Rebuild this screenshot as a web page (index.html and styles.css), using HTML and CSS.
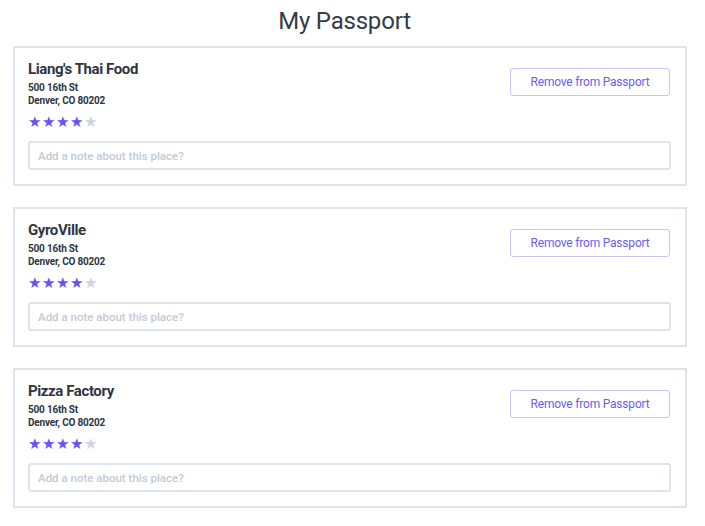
FILE: index.html
```html
<!DOCTYPE html>
<html>
<head>
<meta charset="utf-8">
<link rel="stylesheet" href="styles.css">
</head>
<body>
<h1 class="page-title">My Passport</h1>
<div class="list">
  <div class="card">
    <div class="card-top">
      <div class="info">
        <div class="name">Liang's Thai Food</div>
        <div class="addr">500 16th St<br>Denver, CO 80202</div>
        <div class="stars"><span class="star on">★</span><span class="star on">★</span><span class="star on">★</span><span class="star on">★</span><span class="star">★</span></div>
      </div>
      <button class="remove">Remove from Passport</button>
    </div>
    <input class="note" type="text" placeholder="Add a note about this place?">
  </div>
  <div class="card">
    <div class="card-top">
      <div class="info">
        <div class="name">GyroVille</div>
        <div class="addr">500 16th St<br>Denver, CO 80202</div>
        <div class="stars"><span class="star on">★</span><span class="star on">★</span><span class="star on">★</span><span class="star on">★</span><span class="star">★</span></div>
      </div>
      <button class="remove">Remove from Passport</button>
    </div>
    <input class="note" type="text" placeholder="Add a note about this place?">
  </div>
  <div class="card">
    <div class="card-top">
      <div class="info">
        <div class="name">Pizza Factory</div>
        <div class="addr">500 16th St<br>Denver, CO 80202</div>
        <div class="stars"><span class="star on">★</span><span class="star on">★</span><span class="star on">★</span><span class="star on">★</span><span class="star">★</span></div>
      </div>
      <button class="remove">Remove from Passport</button>
    </div>
    <input class="note" type="text" placeholder="Add a note about this place?">
  </div>
</div>
</body>
</html>
```
FILE: styles.css
```css
html, body {
  margin: 0;
  padding: 0;
  background: #fff;
}
body {
  font-family: Roboto, "Noto Sans", sans-serif;
  color: #2f3944;
}
.page-title {
  margin: 0;
  padding: 6px 16px 0 0;
  height: 46px;
  box-sizing: border-box;
  text-align: center;
  font-weight: 400;
  font-size: 24px;
  line-height: 30px;
  color: #333c47;
  letter-spacing: -0.2px;
}
.list {
  display: flex;
  flex-direction: column;
  gap: 21px;
  padding-left: 13px;
}
.card {
  width: 674px;
  height: 140px;
  box-sizing: border-box;
  border: 2px solid #dfe4ec;
  padding: 12px 15px 0 13px;
}
.card-top {
  display: flex;
  justify-content: space-between;
  align-items: flex-start;
}
.name {
  font-weight: 700;
  font-size: 15px;
  line-height: 18px;
  color: #2e3640;
  letter-spacing: -0.4px;
}
.addr {
  margin-top: 3px;
  font-weight: 700;
  font-size: 10px;
  line-height: 13px;
  color: #2e3640;
  letter-spacing: -0.2px;
}
.stars {
  display: flex;
  gap: 1px;
  margin-top: 7px;
  font-size: 15px;
  line-height: 17px;
}
.star {
  color: #cfd5de;
}
.star.on {
  color: #6455f5;
}
.remove {
  margin-top: 8px;
  width: 160px;
  height: 28px;
  box-sizing: border-box;
  background: #fff;
  border: 1px solid #cbc3fb;
  border-radius: 3px;
  font-family: Roboto, sans-serif;
  font-size: 12px;
  color: #6a5ef0;
  letter-spacing: -0.2px;
  padding: 0;
}
.note {
  display: block;
  margin-top: 10px;
  width: 643px;
  height: 29px;
  box-sizing: border-box;
  border: 2px solid #dfe4ec;
  border-radius: 3px;
  padding: 0 8px;
  font-family: Roboto, sans-serif;
  font-size: 11.5px;
  font-weight: 500;
  outline: none;
}
.note::placeholder {
  color: #c3cad5;
}
```
